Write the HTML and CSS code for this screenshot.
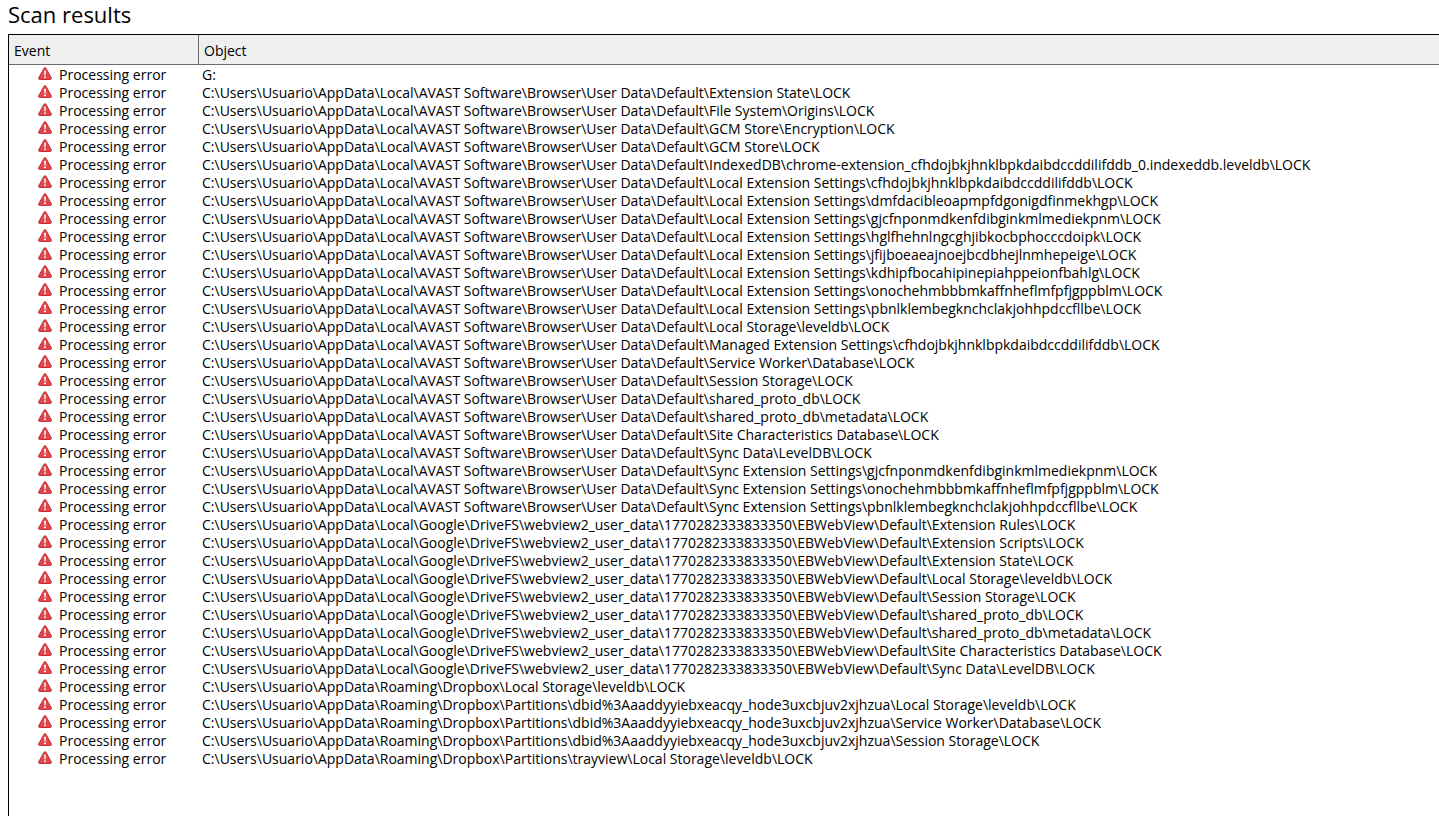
FILE: index.html
```html
<!DOCTYPE html>
<html lang="en">
<head>
    <meta charset="UTF-8">
    <meta name="viewport" content="width=device-width, initial-scale=1.0">
    <title>Scan results</title>
    <link rel="stylesheet" href="styles.css">
</head>
<body>
<svg class="sprite" aria-hidden="true">
    <symbol id="icon-error" viewBox="0 0 14 13">
        <path d="M6.1 1.1Q7 0.1 7.9 1.1L13.4 11Q13.7 12.4 12.5 12.5H1.5Q0.3 12.4 0.6 11Z" fill="#e0464a" stroke="#c4343a" stroke-width="1"/>
        <path d="M6.1 3.8H7.9L7.6 8.6H6.4Z" fill="#fff"/>
        <rect x="6.1" y="9.5" width="1.8" height="1.6" fill="#fff"/>
    </symbol>
</svg>
<main class="container">
    <h1>Scan results</h1>
    <div class="results">
        <table>
            <thead>
                <tr>
                    <th class="event" scope="col">Event</th>
                    <th class="object" scope="col">Object</th>
                </tr>
            </thead>
            <tbody id="result-list"></tbody>
        </table>
    </div>
</main>

<script>
    const avast = 'C:\\Users\\Usuario\\AppData\\Local\\AVAST Software\\Browser\\User Data\\Default\\';
    const driveFs = 'C:\\Users\\Usuario\\AppData\\Local\\Google\\DriveFS\\webview2_user_data\\1770282333833350\\EBWebView\\Default\\';
    const dropbox = 'C:\\Users\\Usuario\\AppData\\Roaming\\Dropbox\\';
    const partition = dropbox + 'Partitions\\dbid%3Aaaddyyiebxeacqy_hode3uxcbjuv2xjhzua\\';

    const objects = [
        'G:',
        avast + 'Extension State\\LOCK',
        avast + 'File System\\Origins\\LOCK',
        avast + 'GCM Store\\Encryption\\LOCK',
        avast + 'GCM Store\\LOCK',
        avast + 'IndexedDB\\chrome-extension_cfhdojbkjhnklbpkdaibdccddilifddb_0.indexeddb.leveldb\\LOCK',
        avast + 'Local Extension Settings\\cfhdojbkjhnklbpkdaibdccddilifddb\\LOCK',
        avast + 'Local Extension Settings\\dmfdacibleoapmpfdgonigdfinmekhgp\\LOCK',
        avast + 'Local Extension Settings\\gjcfnponmdkenfdibginkmlmediekpnm\\LOCK',
        avast + 'Local Extension Settings\\hglfhehnlngcghjibkocbphocccdoipk\\LOCK',
        avast + 'Local Extension Settings\\jfijboeaeajnoejbcdbhejlnmhepeige\\LOCK',
        avast + 'Local Extension Settings\\kdhipfbocahipinepiahppeionfbahlg\\LOCK',
        avast + 'Local Extension Settings\\onochehmbbbmkaffnheflmfpfjgppblm\\LOCK',
        avast + 'Local Extension Settings\\pbnlklembegknchclakjohhpdccfllbe\\LOCK',
        avast + 'Local Storage\\leveldb\\LOCK',
        avast + 'Managed Extension Settings\\cfhdojbkjhnklbpkdaibdccddilifddb\\LOCK',
        avast + 'Service Worker\\Database\\LOCK',
        avast + 'Session Storage\\LOCK',
        avast + 'shared_proto_db\\LOCK',
        avast + 'shared_proto_db\\metadata\\LOCK',
        avast + 'Site Characteristics Database\\LOCK',
        avast + 'Sync Data\\LevelDB\\LOCK',
        avast + 'Sync Extension Settings\\gjcfnponmdkenfdibginkmlmediekpnm\\LOCK',
        avast + 'Sync Extension Settings\\onochehmbbbmkaffnheflmfpfjgppblm\\LOCK',
        avast + 'Sync Extension Settings\\pbnlklembegknchclakjohhpdccfllbe\\LOCK',
        driveFs + 'Extension Rules\\LOCK',
        driveFs + 'Extension Scripts\\LOCK',
        driveFs + 'Extension State\\LOCK',
        driveFs + 'Local Storage\\leveldb\\LOCK',
        driveFs + 'Session Storage\\LOCK',
        driveFs + 'shared_proto_db\\LOCK',
        driveFs + 'shared_proto_db\\metadata\\LOCK',
        driveFs + 'Site Characteristics Database\\LOCK',
        driveFs + 'Sync Data\\LevelDB\\LOCK',
        dropbox + 'Local Storage\\leveldb\\LOCK',
        partition + 'Local Storage\\leveldb\\LOCK',
        partition + 'Service Worker\\Database\\LOCK',
        partition + 'Session Storage\\LOCK',
        dropbox + 'Partitions\\trayview\\Local Storage\\leveldb\\LOCK'
    ];

    const resultList = document.getElementById('result-list');
    objects.forEach((object) => {
        const row = resultList.insertRow();
        row.innerHTML = `
            <td><div class="event-cell"><svg class="icon" aria-hidden="true"><use href="#icon-error"/></svg>Processing error</div></td>
            <td>${object}</td>
        `;
    });
</script>
</body>
</html>
```
FILE: styles.css
```css
* {
    box-sizing: border-box;
}
body {
    margin: 0;
    font-family: Tahoma, "Open Sans", sans-serif;
    font-size: 14px;
    font-variant-ligatures: none;
    color: #000;
    background-color: #fff;
}
.sprite {
    display: none;
}
.container {
    display: flex;
    flex-direction: column;
    min-height: 100vh;
    padding-left: 8px;
    overflow: hidden;
}
h1 {
    margin: 0;
    padding-bottom: 6px;
    font-size: 22px;
    font-weight: normal;
    line-height: 28px;
}
.results {
    flex: 1;
    border-top: 1px solid #000;
    border-left: 1px solid #000;
}
table {
    width: 100%;
    table-layout: fixed;
    border-collapse: separate;
    border-spacing: 0;
}
th {
    height: 30px;
    padding: 2px 5px 0;
    font-weight: normal;
    text-align: left;
    background-color: #efefef;
    border-bottom: 1px solid #6b6b6b;
}
th.event {
    width: 190px;
    border-right: 1px solid #6b6b6b;
}
td {
    height: 18px;
    padding: 0 3px;
    line-height: 18px;
    white-space: nowrap;
}
tbody tr:first-child td {
    height: 19px;
    padding-top: 1px;
}
.event-cell {
    display: flex;
    align-items: flex-start;
    gap: 7px;
    padding-left: 26px;
}
.icon {
    width: 14px;
    height: 13px;
    margin-top: 1px;
    flex: none;
}
```
